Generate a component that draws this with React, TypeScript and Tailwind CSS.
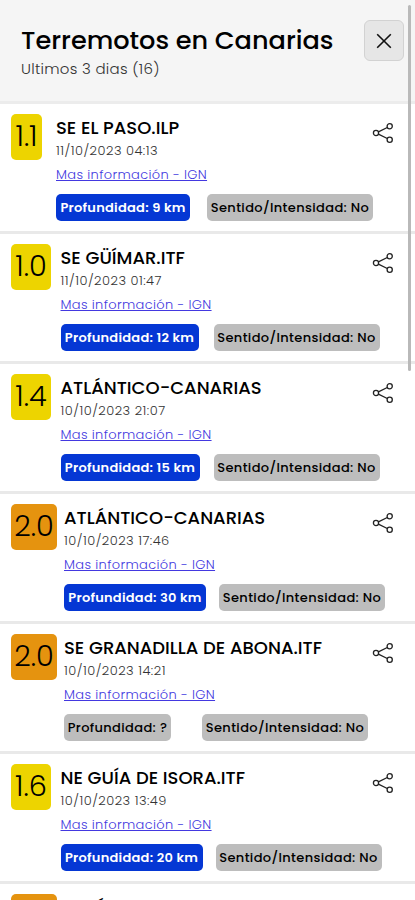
import clsx from 'clsx'

type Quake = {
  magnitude: string
  place: string
  date: string
  depth: string
  // widths follow the proportions of each label
  badge: string
  offset: string
  pill: string
  gap: string
}

const QUAKES: Quake[] = [
  {
    magnitude: '1.1',
    place: 'SE EL PASO.ILP',
    date: '11/10/2023 04:13',
    depth: '9 km',
    badge: 'w-[31px]',
    offset: 'ml-3.5',
    pill: 'w-[134px]',
    gap: 'ml-[17px]',
  },
  {
    magnitude: '1.0',
    place: 'SE GÜÍMAR.ITF',
    date: '11/10/2023 01:47',
    depth: '12 km',
    badge: 'w-10',
    offset: 'ml-[9.5px]',
    pill: 'w-[138px]',
    gap: 'ml-[15px]',
  },
  {
    magnitude: '1.4',
    place: 'ATLÁNTICO-CANARIAS',
    date: '10/10/2023 21:07',
    depth: '15 km',
    badge: 'w-10',
    offset: 'ml-[9.5px]',
    pill: 'w-[139px]',
    gap: 'ml-3.5',
  },
  {
    magnitude: '2.0',
    place: 'ATLÁNTICO-CANARIAS',
    date: '10/10/2023 17:46',
    depth: '30 km',
    badge: 'w-[46px]',
    offset: 'ml-[7px]',
    pill: 'w-[142px]',
    gap: 'ml-[13px]',
  },
  {
    magnitude: '2.0',
    place: 'SE GRANADILLA DE ABONA.ITF',
    date: '10/10/2023 14:21',
    depth: '?',
    badge: 'w-[46px]',
    offset: 'ml-[7px]',
    pill: 'w-[107px]',
    gap: 'ml-[31px]',
  },
  {
    magnitude: '1.6',
    place: 'NE GUÍA DE ISORA.ITF',
    date: '10/10/2023 13:49',
    depth: '20 km',
    badge: 'w-10',
    offset: 'ml-[9.5px]',
    pill: 'w-[142px]',
    gap: 'ml-[13px]',
  },
  {
    magnitude: '2.0',
    place: 'ATLÁNTICO-CANARIAS',
    date: '10/10/2023 12:30',
    depth: '30 km',
    badge: 'w-[46px]',
    offset: 'ml-[7px]',
    pill: 'w-[142px]',
    gap: 'ml-[13px]',
  },
]

export default function App() {
  return (
    <div className="relative flex h-[900px] w-[415px] flex-col overflow-hidden bg-white font-[Poppins,Inter,sans-serif] text-black">
      <Header />
      <ul className="flex flex-col">
        {QUAKES.map((quake, i) => (
          <QuakeRow key={i} quake={quake} />
        ))}
      </ul>
      <div className="absolute top-[5px] left-[408px] h-[366px] w-[3px] rounded-full bg-[#b9b9b9]" />
    </div>
  )
}

function Header() {
  return (
    <header className="flex h-[104px] shrink-0 items-start justify-between border-b-[3px] border-[#ececec] bg-[#f5f5f5] pt-5 pr-[11px] pl-[21px]">
      <div className="whitespace-nowrap">
        <h1 className="pt-1 text-[25.6px] leading-8 font-medium">Terremotos en Canarias</h1>
        <p className="pt-px text-[15px] leading-6 font-light tracking-[0.27px] text-[#333]">Ultimos 3 dias (16)</p>
      </div>
      <button className="flex h-[41px] w-10 items-center justify-center rounded-md border border-[#d2d2d2] bg-[#e6e6e6]">
        <svg viewBox="0 0 16 16" className="size-4" fill="none" stroke="#111" strokeWidth="1.6">
          <path d="M1.2 1.2 14.8 14.8M14.8 1.2 1.2 14.8" />
        </svg>
      </button>
    </header>
  )
}

function QuakeRow({ quake }: { quake: Quake }) {
  const strong = Number(quake.magnitude) >= 2
  const known = quake.depth !== '?'
  return (
    <li className="flex h-[130px] shrink-0 items-start border-b-[3px] border-[#e9e9e9] pt-2.5 pl-[11px]">
      <div
        className={clsx(
          'flex h-[46px] shrink-0 items-center justify-center rounded-[5px] text-[28.8px] font-light',
          strong ? 'bg-[#e5930f]' : 'bg-[#edd400]',
          quake.badge,
        )}
      >
        {quake.magnitude}
      </div>
      <div className={clsx('grow whitespace-nowrap', quake.offset)}>
        <div className="flex justify-between pr-[21px]">
          <div>
            <h2 className="text-lg leading-7 font-medium">{quake.place}</h2>
            <p className="text-[13px] leading-[18px] font-light tracking-[0.46px] text-[#333]">{quake.date}</p>
          </div>
          <ShareIcon />
        </div>
        <a
          href="#"
          className="mt-[3px] block text-[13px] leading-6 font-light tracking-[0.34px] text-[#4338e0] underline"
        >
          Mas información - IGN
        </a>
        <div className="mt-[7px] flex">
          <Pill
            className={clsx(
              quake.pill,
              known
                ? 'bg-[#0537d4] font-semibold tracking-[0.25px] text-white'
                : 'bg-[#bdbdbd] font-medium tracking-[0.36px]',
            )}
          >
            Profundidad: {quake.depth}
          </Pill>
          <Pill className={clsx('w-[166px] bg-[#bdbdbd] font-medium tracking-[0.36px]', quake.gap)}>
            Sentido/Intensidad: No
          </Pill>
        </div>
      </div>
    </li>
  )
}

function Pill({ className, children }: { className: string; children: React.ReactNode }) {
  return (
    <span
      className={clsx('flex h-[27px] shrink-0 items-center justify-center rounded-[5px] text-[13px]', className)}
    >
      {children}
    </span>
  )
}

function ShareIcon() {
  return (
    <svg viewBox="0 0 22 20" className="mt-[9px] h-5 w-[22px]" fill="none" stroke="#222" strokeWidth="1.3">
      <circle cx="4" cy="10" r="2.6" />
      <circle cx="17.7" cy="3.3" r="2.6" />
      <circle cx="17.7" cy="16.7" r="2.6" />
      <path d="M6.4 8.8 15.3 4.5M6.4 11.2 15.3 15.5" />
    </svg>
  )
}
